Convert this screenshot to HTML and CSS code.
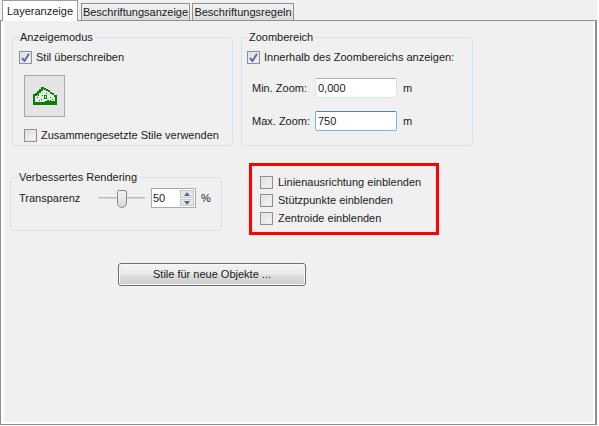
FILE: index.html
```html
<!DOCTYPE html>
<html lang="de">
<head>
<meta charset="utf-8">
<title>Layeranzeige</title>
<link rel="stylesheet" href="styles.css">
</head>
<body>
<div class="dialog">
  <div class="tabs">
    <div class="tab active">Layeranzeige</div>
    <div class="tab t2">Beschriftungsanzeige</div>
    <div class="tab t3">Beschriftungsregeln</div>
  </div>
  <div class="panel">
    <div class="inner">
      <div class="row-top">
        <fieldset class="group g-mode">
          <legend>Anzeigemodus</legend>
          <label class="check first"><span class="box on"><svg viewBox="0 0 9 9" width="9" height="9"><path d="M1 5l2.5 3L8 .8" fill="none" stroke="#5a6cb4" stroke-width="2"/></svg></span>Stil überschreiben</label>
          <div class="swatch">
            <svg viewBox="0 0 24 18" width="24" height="18" shape-rendering="crispEdges">
              <path d="M0 18V7h2V6h2V4h2V2h2V0h3v1h2v1h2v1h2v2h2v1h2v2h3v10z" fill="#088000"/>
              <path d="M2 15V9h2V8h2V6h2V4h2V2h1v1h2v1h2v1h2v2h2v1h2v2h1v4z" fill="#e4ebe4"/>
              <path d="M4 10h1v1H4zM6 13h1v1H6zM9 8h1v1H9zM13 6h1v1h-1zM17 10h1v1h-1zM19 12h1v1h-1zM14 13h2v1h-2zM11 8h3v1h-3zM11 11h3v1h-3zM11 9h1v2h-1zM13 9h1v2h-1zM8 12h1v1H8zM17 13h1v1h-1zM5 8h1v1H5z" fill="#088000"/>
            </svg>
          </div>
          <label class="check compound"><span class="box"></span>Zusammengesetzte Stile verwenden</label>
        </fieldset>
        <fieldset class="group g-zoom">
          <legend>Zoombereich</legend>
          <label class="check first"><span class="box on"><svg viewBox="0 0 9 9" width="9" height="9"><path d="M1 5l2.5 3L8 .8" fill="none" stroke="#5a6cb4" stroke-width="2"/></svg></span>Innerhalb des Zoombereichs anzeigen:</label>
          <div class="zoom-row min"><span class="zl">Min. Zoom:</span><span class="field">0,000</span><span>m</span></div>
          <div class="zoom-row max"><span class="zl">Max. Zoom:</span><span class="field focus">750</span><span>m</span></div>
        </fieldset>
      </div>
      <div class="row-mid">
        <fieldset class="group g-render">
          <legend>Verbessertes Rendering</legend>
          <div class="render-row">
            <span class="tl">Transparenz</span>
            <span class="slider"><span class="thumb"></span></span>
            <span class="spin"><span class="spin-val">50</span><span class="arrows"><span class="arr up"></span><span class="arr down"></span></span></span>
            <span>%</span>
          </div>
        </fieldset>
        <div class="redbox">
          <label class="check"><span class="box"></span>Linienausrichtung einblenden</label>
          <label class="check"><span class="box"></span>Stützpunkte einblenden</label>
          <label class="check"><span class="box"></span>Zentroide einblenden</label>
        </div>
      </div>
      <div class="btn">Stile für neue Objekte ...</div>
    </div>
  </div>
</div>
</body>
</html>
```
FILE: styles.css
```css
* { box-sizing: border-box; }
html, body { margin: 0; padding: 0; background: #fff; }
body { width: 599px; height: 426px; overflow: hidden; font: 11px "Liberation Sans", Arial, sans-serif; color: #1a1a1a; }
.dialog { width: 597px; height: 425px; background: #f0f0f0; display: flex; flex-direction: column; }
.tabs { display: flex; align-items: flex-end; height: 20px; padding-left: 2px; position: relative; z-index: 1; }
.tab { height: 17px; border: 1px solid #8c8f98; border-bottom: 0; background: linear-gradient(#f2f2f2, #dcdcdc); line-height: 17px; text-align: center; }
.tab.active { width: 76px; margin-bottom: -1px; height: 21px; background: #fff; border-color: #9a9da5; line-height: 20px; border-bottom: 0; margin-right: 1px; }
.t2 { width: 109px; margin-left: 2px; }
.t3 { width: 102px; margin-left: 2px; }
.panel { flex: 1; border: 1px solid #8c8f98; border-right-width: 2px; background: #fff; padding: 0 2px 2px 3px; min-height: 0; }
.inner { height: 100%; background: #f0f0f0; padding: 9px 0 0 8px; display: flex; flex-direction: column; }
.row-top { display: flex; gap: 8px; }
.group { margin: 0; padding: 0; border: 1px solid #d9e2ea; border-radius: 3px; min-width: 0; }
.group legend { margin-left: 6px; padding: 0 2px 0 1px; line-height: 14px; }
.g-mode { width: 221px; height: 116px; }
.g-zoom { width: 232px; height: 116px; }
.check { display: flex; align-items: center; gap: 4px; height: 18px; white-space: nowrap; }
.box { width: 13px; height: 13px; flex: none; border: 1px solid #8f8f8f; background: linear-gradient(135deg, #dcdcdc, #f8f8f8); box-shadow: inset 0 0 0 1px #e8e8e8; display: flex; align-items: center; justify-content: center; }
.first { margin: 4px 0 0 6px; }
.g-zoom .first { margin-left: 5px; }
.swatch { width: 41px; height: 42px; margin: 9px 0 0 11px; background: #e4e4e4; border: 1px solid #a8a8a8; display: flex; align-items: center; justify-content: center; }
.compound { margin: 9px 0 0 11px; }
.zoom-row { display: flex; align-items: center; height: 20px; margin-left: 10px; }
.min { margin-top: 12px; }
.max { margin-top: 13px; }
.zl { width: 63px; }
.field { width: 82px; height: 20px; background: #fff; border: 1px solid #dde2e8; border-top-color: #ababab; border-radius: 2px; padding-left: 2px; line-height: 18px; margin-right: 6px; }
.focus { border-color: #7fb4d8; border-top-color: #4f87b3; }
.row-mid { display: flex; margin: 17px 0 0 -2px; }
.g-render { width: 212px; height: 61px; flex: none; margin-top: 7px; }
.g-render legend { margin-left: 7px; }
.render-row { display: flex; align-items: center; height: 20px; margin: 4px 0 0 8px; }
.tl { width: 79px; }
.slider { width: 47px; height: 2px; background: #d8d8d8; border-top: 1px solid #bbb; position: relative; margin-right: 6px; }
.thumb { position: absolute; left: 19px; top: -8px; width: 10px; height: 18px; background: linear-gradient(#f4f4f4, #d8d8d8); border: 1px solid #8a8a8a; border-radius: 2px 2px 5px 5px; }
.spin { width: 45px; height: 20px; border: 1px solid #a9a9a9; background: #fff; display: flex; justify-content: space-between; margin-right: 5px; line-height: 18px; padding: 0 1px; }
.arrows { width: 14px; display: flex; flex-direction: column; gap: 1px; margin: 1px 0; }
.arr { flex: 1; background: #e4e6ea; border: 1px solid #c6cad0; position: relative; }
.arr::after { content: ""; position: absolute; left: 3px; border: 3px solid transparent; }
.up::after { top: 1px; border-top: 0; border-bottom: 4px solid #5a6b88; }
.down::after { top: 1px; border-bottom: 0; border-top: 4px solid #5a6b88; }
.redbox { width: 190px; height: 72px; margin: 0 0 0 27px; border: 3px solid #f00; padding: 7px 0 0 8px; }
.redbox .check { gap: 5px; }
.btn { width: 188px; height: 23px; margin: 28px 0 0 106px; border: 1px solid #707070; border-radius: 3px; text-align: center; line-height: 21px; background: linear-gradient(#f3f3f3 0, #ebebeb 48%, #dcdcdc 52%, #cfcfcf 100%); box-shadow: inset 0 0 0 1px #f8f8f8; }
```
